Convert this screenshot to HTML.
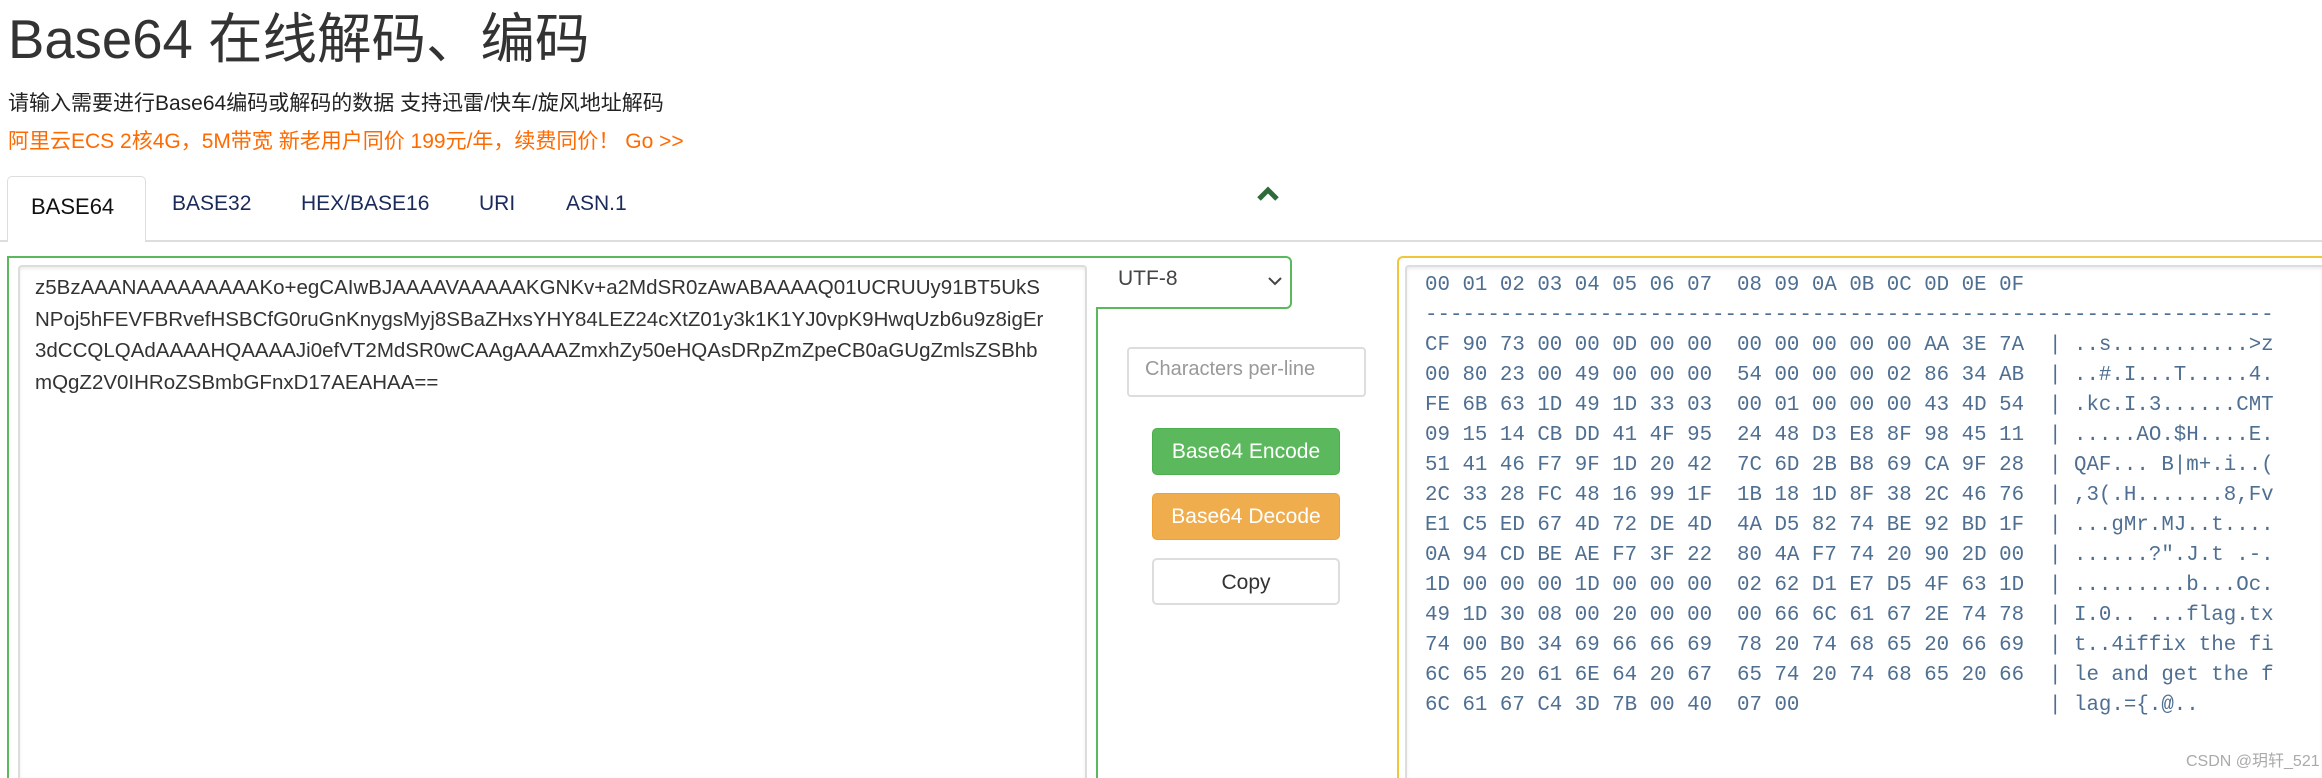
<!DOCTYPE html>
<html style="width:2322px;height:778px;overflow:hidden"><head><meta charset="utf-8"><style>
*{box-sizing:border-box;margin:0;padding:0}
body{width:2322px;height:778px;overflow:hidden;background:#fff;font-family:"Liberation Sans","Noto Sans CJK SC",sans-serif;color:#333;position:relative}
.a{position:absolute;white-space:nowrap}
.hex{font-family:"Liberation Mono",monospace;font-size:20.8px;line-height:30px;color:#4f6f92;white-space:pre}
.btn{position:absolute;left:1152px;width:188px;height:47px;border-radius:5px;font-size:21px;text-align:center;line-height:45px}
</style></head><body>
<div class="a" style="left:8px;top:7px;font-size:54.5px;line-height:66px;color:#333">Base64 在线解码、编码</div>
<div class="a" style="left:8px;top:90px;font-size:21px;line-height:28px;color:#222">请输入需要进行Base64编码或解码的数据 支持迅雷/快车/旋风地址解码</div>
<div class="a" style="left:8px;top:128px;font-size:21px;line-height:28px;color:#ff6a00">阿里云ECS 2核4G，5M带宽 新老用户同价 199元/年，续费同价！ Go &gt;&gt;</div>

<div class="a" style="left:0;top:240px;width:2322px;height:2px;background:#ddd"></div>
<div class="a" style="left:7px;top:176px;width:139px;height:66px;background:#fff;border:1px solid #ddd;border-bottom:none;border-radius:5px 5px 0 0"></div>
<div class="a" style="left:31px;top:194px;font-size:22px;color:#111">BASE64</div>
<div class="a" style="left:172px;top:192px;font-size:21px;color:#1a2a5a">BASE32</div>
<div class="a" style="left:301px;top:192px;font-size:21px;color:#1a2a5a">HEX/BASE16</div>
<div class="a" style="left:479px;top:192px;font-size:21px;color:#1a2a5a">URI</div>
<div class="a" style="left:566px;top:192px;font-size:21px;color:#1a2a5a">ASN.1</div>
<svg class="a" style="left:1256px;top:185px" width="24" height="18"><path d="M3 14 L12 5 L21 14" stroke="#2e6b3a" stroke-width="5" fill="none"/></svg>

<div class="a" style="left:7px;top:256px;width:1092px;height:522px;border-left:2px solid #5cb85c;border-top:2px solid #5cb85c"></div>
<div class="a" style="left:1096px;top:256px;width:196px;height:53px;border:2px solid #5cb85c;border-left:none;border-radius:0 6px 6px 0;background:#fff"></div>
<div class="a" style="left:1096px;top:307px;width:2px;height:471px;background:#5cb85c"></div>
<div class="a" style="left:1118px;top:267px;font-size:21px;color:#444">UTF-8</div>
<svg class="a" style="left:1267px;top:275px" width="16" height="12"><path d="M2 3 L8 9 L14 3" stroke="#444" stroke-width="2" fill="none"/></svg>

<div class="a" style="left:18px;top:265px;width:1069px;height:513px;border:2px solid #ddd;border-bottom:none;border-radius:4px 4px 0 0;box-shadow:inset 0 2px 3px rgba(0,0,0,.08)"></div>
<div class="a" style="left:35px;top:272px;font-size:20.5px;line-height:31.6px;color:#333">z5BzAAANAAAAAAAAAKo+egCAIwBJAAAAVAAAAAKGNKv+a2MdSR0zAwABAAAAQ01UCRUUy91BT5UkS<br>NPoj5hFEVFBRvefHSBCfG0ruGnKnygsMyj8SBaZHxsYHY84LEZ24cXtZ01y3k1K1YJ0vpK9HwqUzb6u9z8igEr<br>3dCCQLQAdAAAAHQAAAAJi0efVT2MdSR0wCAAgAAAAZmxhZy50eHQAsDRpZmZpeCB0aGUgZmlsZSBhb<br>mQgZ2V0IHRoZSBmbGFnxD17AEAHAA==</div>

<div class="a" style="left:1127px;top:347px;width:239px;height:50px;border:2px solid #ddd;border-radius:4px"></div>
<div class="a" style="left:1145px;top:358px;font-size:20px;color:#999">Characters per-line</div>
<div class="btn" style="top:428px;background:#5cb85c;color:#fff;border:1px solid #4cae4c">Base64 Encode</div>
<div class="btn" style="top:493px;background:#f0ad4e;color:#fff;border:1px solid #eea236">Base64 Decode</div>
<div class="btn" style="top:558px;background:#fff;color:#333;border:2px solid #ddd">Copy</div>

<div class="a" style="left:1397px;top:256px;width:925px;height:522px;border-left:2px solid #f0c53a;border-top:2px solid #f0c53a;border-radius:6px 0 0 0"></div>
<div class="a" style="left:1405px;top:265px;width:917px;height:513px;border-left:2px solid #ddd;border-top:2px solid #ddd;border-radius:4px 0 0 0;box-shadow:inset 0 2px 3px rgba(0,0,0,.08)"></div>
<div class="a hex" style="left:1425px;top:271px">00 01 02 03 04 05 06 07  08 09 0A 0B 0C 0D 0E 0F
--------------------------------------------------------------------
CF 90 73 00 00 0D 00 00  00 00 00 00 00 AA 3E 7A  | ..s...........>z
00 80 23 00 49 00 00 00  54 00 00 00 02 86 34 AB  | ..#.I...T.....4.
FE 6B 63 1D 49 1D 33 03  00 01 00 00 00 43 4D 54  | .kc.I.3......CMT
09 15 14 CB DD 41 4F 95  24 48 D3 E8 8F 98 45 11  | .....AO.$H....E.
51 41 46 F7 9F 1D 20 42  7C 6D 2B B8 69 CA 9F 28  | QAF... B|m+.i..(
2C 33 28 FC 48 16 99 1F  1B 18 1D 8F 38 2C 46 76  | ,3(.H.......8,Fv
E1 C5 ED 67 4D 72 DE 4D  4A D5 82 74 BE 92 BD 1F  | ...gMr.MJ..t....
0A 94 CD BE AE F7 3F 22  80 4A F7 74 20 90 2D 00  | ......?".J.t .-.
1D 00 00 00 1D 00 00 00  02 62 D1 E7 D5 4F 63 1D  | .........b...Oc.
49 1D 30 08 00 20 00 00  00 66 6C 61 67 2E 74 78  | I.0.. ...flag.tx
74 00 B0 34 69 66 66 69  78 20 74 68 65 20 66 69  | t..4iffix the fi
6C 65 20 61 6E 64 20 67  65 74 20 74 68 65 20 66  | le and get the f
6C 61 67 C4 3D 7B 00 40  07 00                    | lag.={.@..</div>
<div class="a" style="left:2186px;top:747px;font-size:16px;color:#aaa">CSDN @玥轩_521</div>
</body></html>
